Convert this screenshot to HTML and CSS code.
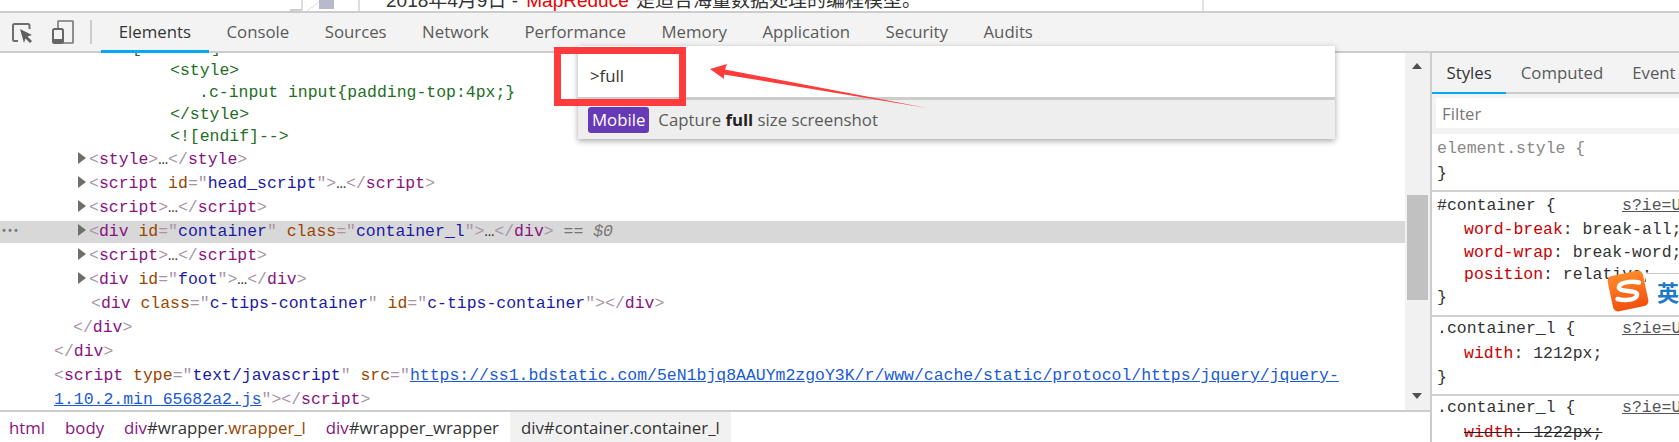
FILE: index.html
```html
<!DOCTYPE html>
<html lang="zh">
<head>
<meta charset="utf-8">
<title>DevTools</title>
<link rel="stylesheet" href="styles.css">
</head>
<body>
<div class="page-strip">
  <svg class="thumb" width="70" height="11" viewBox="0 0 70 11"><path d="M0 10h11" stroke="#999" stroke-width="1"/><path d="M12 0v11M69 0v11" stroke="#ddd" stroke-width="2"/><path d="M17 11l12-9" stroke="#ddd"/><rect x="29" y="0" width="15" height="9" fill="#b9b9cc"/></svg>
  <div class="page-text">2018年4月9日 - <span class="hit">MapReduce</span> 是适合海量数据处理的编程模型。</div>
  <div class="page-rule"></div>
  <div class="page-link">目录</div>
</div>

<div class="toolbar">
  <svg class="tool-inspect" width="20" height="20" viewBox="0 0 20 20"><path d="M6 18H2.5A1.5 1.5 0 0 1 1 16.500V2.500A1.500 1.500 0 0 1 2.500 1H16A1.500 1.500 0 0 1 17.500 2.500V6" fill="none" stroke="#6e6e6e" stroke-width="2"/><path d="M8 6l12 6-4.500 1.500L20 18l-2 2-4.500-4.500L12 20z" fill="#5f5f5f"/></svg>
  <svg class="tool-device" width="22" height="24" viewBox="0 0 22 24"><path d="M6 8V1.500A.5.500 0 0 1 6.500 1h14a.500.500 0 0 1 .500.500v21a.500.500 0 0 1-.500.500H11" fill="none" stroke="#777" stroke-width="1.600"/><rect x="1" y="9" width="10" height="14" rx="1.500" fill="none" stroke="#666" stroke-width="2"/><rect x="1" y="19" width="10" height="4" fill="#666"/></svg>
  <div class="tool-sep"></div>
  <div class="tabs">
    <div class="tab active">Elements</div>
    <div class="tab">Console</div>
    <div class="tab">Sources</div>
    <div class="tab">Network</div>
    <div class="tab">Performance</div>
    <div class="tab">Memory</div>
    <div class="tab">Application</div>
    <div class="tab">Security</div>
    <div class="tab">Audits</div>
  </div>
</div>

<div class="main">
  <div class="left">
    <div class="dom-area">
      <div class="tree">
        <div class="tight-group">
          <div class="row i-if cm">[if IE 8]</div>
          <div class="row i-style cm">&lt;style&gt;</div>
          <div class="row i-css cm">.c-input input{padding-top:4px;}</div>
          <div class="row i-style cm">&lt;/style&gt;</div>
          <div class="row i-style cm">&lt;![endif]--&gt;</div>
        </div>
        <div class="row wide i-arrow"><span class="arrow"></span><span class="br">&lt;</span><span class="tag">style</span><span class="br">&gt;</span>…<span class="br">&lt;/</span><span class="tag">style</span><span class="br">&gt;</span></div>
        <div class="row wide i-arrow"><span class="arrow"></span><span class="br">&lt;</span><span class="tag">script</span> <span class="an">id</span><span class="br">="</span><span class="av">head_script</span><span class="br">"&gt;</span>…<span class="br">&lt;/</span><span class="tag">script</span><span class="br">&gt;</span></div>
        <div class="row wide i-arrow"><span class="arrow"></span><span class="br">&lt;</span><span class="tag">script</span><span class="br">&gt;</span>…<span class="br">&lt;/</span><span class="tag">script</span><span class="br">&gt;</span></div>
        <div class="row wide i-arrow selected"><span class="dots">•••</span><span class="arrow"></span><span class="br">&lt;</span><span class="tag">div</span> <span class="an">id</span><span class="br">="</span><span class="av">container</span><span class="br">"</span> <span class="an">class</span><span class="br">="</span><span class="av">container_l</span><span class="br">"&gt;</span>…<span class="br">&lt;/</span><span class="tag">div</span><span class="br">&gt;</span><span class="eq"> == <em>$0</em></span></div>
        <div class="row wide i-arrow"><span class="arrow"></span><span class="br">&lt;</span><span class="tag">script</span><span class="br">&gt;</span>…<span class="br">&lt;/</span><span class="tag">script</span><span class="br">&gt;</span></div>
        <div class="row wide i-arrow"><span class="arrow"></span><span class="br">&lt;</span><span class="tag">div</span> <span class="an">id</span><span class="br">="</span><span class="av">foot</span><span class="br">"&gt;</span>…<span class="br">&lt;/</span><span class="tag">div</span><span class="br">&gt;</span></div>
        <div class="row wide i-2"><span class="br">&lt;</span><span class="tag">div</span> <span class="an">class</span><span class="br">="</span><span class="av">c-tips-container</span><span class="br">"</span> <span class="an">id</span><span class="br">="</span><span class="av">c-tips-container</span><span class="br">"&gt;&lt;/</span><span class="tag">div</span><span class="br">&gt;</span></div>
        <div class="row wide i-1"><span class="br">&lt;/</span><span class="tag">div</span><span class="br">&gt;</span></div>
        <div class="row wide i-0"><span class="br">&lt;/</span><span class="tag">div</span><span class="br">&gt;</span></div>
        <div class="row wide i-0"><span class="br">&lt;</span><span class="tag">script</span> <span class="an">type</span><span class="br">="</span><span class="av">text/javascript</span><span class="br">"</span> <span class="an">src</span><span class="br">="</span><span class="lk">https://ss1.bdstatic.com/5eN1bjq8AAUYm2zgoY3K/r/www/cache/static/protocol/https/jquery/jquery-</span></div>
        <div class="row wide i-0"><span class="lk">1.10.2.min_65682a2.js</span><span class="br">"&gt;&lt;/</span><span class="tag">script</span><span class="br">&gt;</span></div>
      </div>
      <div class="scrollbar">
        <span class="sb-up"></span>
        <div class="sb-track"><div class="sb-thumb"></div></div>
        <span class="sb-down"></span>
      </div>
    </div>
    <div class="crumbs">
      <div class="crumb"><span class="tag">html</span></div>
      <div class="crumb"><span class="tag">body</span></div>
      <div class="crumb"><span class="tag">div</span>#wrapper<span class="an">.wrapper_l</span></div>
      <div class="crumb"><span class="tag">div</span>#wrapper_wrapper</div>
      <div class="crumb current">div#container.container_l</div>
    </div>
  </div>

  <div class="side">
    <div class="side-tabs">
      <div class="side-tab active">Styles</div>
      <div class="side-tab">Computed</div>
      <div class="side-tab">Event Listeners</div>
    </div>
    <div class="filter-bar"><div class="filter">Filter</div></div>
    <div class="rule rule-element">
      <div class="ln muted">element.style {</div>
      <div class="ln">}</div>
    </div>
    <div class="rule rule-container">
      <div class="ln head"><span class="sel">#container {</span><span class="src">s?ie=UTF-8</span></div>
      <div class="ln decl"><span class="prop">word-break</span>: break-all;</div>
      <div class="ln decl"><span class="prop">word-wrap</span>: break-word;</div>
      <div class="ln decl"><span class="prop">position</span>: relative;</div>
      <div class="ln">}</div>
    </div>
    <div class="rule rule-l">
      <div class="ln head"><span class="sel">.container_l {</span><span class="src">s?ie=UTF-8</span></div>
      <div class="ln decl"><span class="prop">width</span>: 1212px;</div>
      <div class="ln">}</div>
    </div>
    <div class="rule rule-l last">
      <div class="ln head"><span class="sel">.container_l {</span><span class="src">s?ie=UTF-8</span></div>
      <div class="ln decl struck"><span class="prop">width</span>: 1222px;</div>
    </div>
  </div>
</div>

<div class="palette">
  <div class="palette-input">&gt;full</div>
  <div class="palette-item"><span class="badge">Mobile</span><span class="palette-title">Capture <b>full</b> size screenshot</span></div>
</div>

<div class="red-box"></div>
<svg class="red-arrow" width="230" height="50" viewBox="0 0 230 50"><path d="M0 10L17 5L15 10.500L217 49L14 15.500L14 20Z" fill="#ff3b3b"/></svg>

<div class="ime">
  <svg class="ime-logo" width="44" height="44" viewBox="0 0 44 44"><defs><linearGradient id="sg" x1="0" y1="0" x2="0" y2="1"><stop offset="0" stop-color="#ff8a2a"/><stop offset="1" stop-color="#f2500c"/></linearGradient></defs><rect x="4" y="4" width="36" height="36" rx="5" fill="url(#sg)" transform="rotate(-12 22 22)"/><path d="M33 13.500C26 12 16 13 13.500 16.500C11 21 17 21.500 22 22C28 22.500 33 23.500 30.500 27.500C28 31 18 32 11.500 30" fill="none" stroke="#fff" stroke-width="4.500" stroke-linecap="round"/></svg>
  <span class="ime-text">英</span>
</div>
</body>
</html>
```

FILE: styles.css
```css
* { box-sizing: border-box; }
html, body { margin: 0; padding: 0; }
body {
  position: relative;
  width: 1679px;
  height: 442px;
  overflow: hidden;
  background: #fff;
  display: flex;
  flex-direction: column;
  font-family: "Open Sans", "Liberation Sans", sans-serif;
  font-size: 16.8px;
  color: #333;
}

/* page behind DevTools */
.page-strip {
  height: 11px;
  flex: none;
  display: flex;
  overflow: hidden;
  font-family: "Liberation Sans", "Noto Sans CJK SC", sans-serif;
  font-size: 19px;
  line-height: 22px;
  color: #333;
}
.thumb { flex: none; margin-left: 290px; }
.page-text { flex: none; margin: -10px 0 0 26px; white-space: nowrap; width: 816px; }
.hit { color: #e00; margin: 0 2px 0 3px; }
.page-rule { flex: none; width: 2px; background: #e2e2e2; }
.page-link {
  flex: none;
  margin: -10px 0 0 477px;
  white-space: nowrap;
  color: #00c;
  text-decoration: underline;
}

/* toolbar */
.toolbar {
  height: 42px;
  flex: none;
  display: flex;
  align-items: stretch;
  background: #f3f3f3;
  border-top: 2px solid #ccc;
  border-bottom: 2px solid #ccc;
}
.tool-inspect { flex: none; margin: 10px 0 0 12px; }
.tool-device { flex: none; margin: 7px 0 0 20px; }
.tool-sep { flex: none; width: 2px; height: 24px; margin: 7px 0 0 16px; background: #ccc; }
.tabs { display: flex; margin-left: 9px; }
.tab {
  position: relative;
  padding: 0 17.75px;
  color: #5a5a5a;
  line-height: 38px;
  white-space: nowrap;
}
.tab.active { color: #333; }
.tab.active::after {
  content: "";
  position: absolute;
  left: 0;
  right: 0;
  bottom: -2px;
  height: 3px;
  background: #03a9f4;
}

/* main split */
.main { flex: 1; min-height: 0; display: flex; }
.left { width: 1430px; flex: none; display: flex; flex-direction: column; }
.dom-area { flex: 1; min-height: 0; display: flex; border-bottom: 2px solid #ccc; }
.tree {
  flex: 1;
  min-width: 0;
  overflow: hidden;
  font-family: "Liberation Mono", "DejaVu Sans Mono", monospace;
  font-size: 16.48px;
  color: #333;
}
.tight-group { margin: -15px 0 1px; }
.row { height: 22px; line-height: 22px; white-space: nowrap; position: relative; }
.row.wide { margin-bottom: 2px; }
.selected { background: #d8d8d8; }
.cm { color: #236e25; }
.i-if { padding-left: 132px; }
.i-style { padding-left: 170px; }
.i-css { padding-left: 199px; }
.i-arrow { padding-left: 89px; }
.i-2 { padding-left: 91px; }
.i-1 { padding-left: 73px; }
.i-0 { padding-left: 54px; }
.br { color: #a894a6; }
.tag { color: #881280; }
.an { color: #994500; }
.av { color: #1a1aa6; }
.lk { color: #1a5ad6; text-decoration: underline; }
.eq { color: #777; }
.eq em { font-style: italic; }
.arrow {
  position: absolute;
  left: 78px;
  top: 3px;
  border-left: 8px solid #6e6e6e;
  border-top: 6px solid transparent;
  border-bottom: 6px solid transparent;
}
.dots {
  position: absolute;
  left: 1px;
  top: 0;
  font-size: 10px;
  font-weight: 700;
  color: #777;
}

/* scrollbar */
.scrollbar {
  flex: none;
  width: 25px;
  background: #f1f1f1;
  display: flex;
  flex-direction: column;
  align-items: center;
  position: relative;
}
.sb-track { width: 21px; flex: 1; padding-top: 142px; }
.sb-thumb { height: 105px; background: #c1c1c1; }
.sb-up, .sb-down {
  position: absolute;
  left: 7px;
  border-left: 5.5px solid transparent;
  border-right: 5.5px solid transparent;
}
.sb-up { top: 10px; border-bottom: 6px solid #505050; }
.sb-down { bottom: 11px; border-top: 6px solid #505050; }

/* breadcrumbs */
.crumbs { height: 30px; flex: none; display: flex; }
.crumb {
  padding: 0 11px 0 9px;
  line-height: 31px;
  white-space: nowrap;
  color: #333;
}
.crumb.current { background: #f1f1f1; padding: 0 11px; }

/* styles side */
.side {
  width: 249px;
  flex: none;
  overflow: hidden;
  border-left: 2px solid #ccc;
  font-family: "Liberation Mono", "DejaVu Sans Mono", monospace;
  font-size: 16.48px;
  color: #333;
}
.side-tabs {
  display: flex;
  height: 41px;
  background: #f3f3f3;
  border-bottom: 2px solid #ccc;
  font-family: "Open Sans", "Liberation Sans", sans-serif;
  font-size: 16.8px;
  white-space: nowrap;
}
.side-tab { position: relative; padding: 0 14.5px; line-height: 39px; color: #5a5a5a; flex: none; }
.side-tab.active { color: #333; }
.side-tab.active::after {
  content: "";
  position: absolute;
  left: 0;
  right: 0;
  bottom: -2px;
  height: 2px;
  background: #03a9f4;
}
.filter-bar { height: 40px; background: #f3f3f3; padding: 4px 0 6px 4px; }
.filter {
  height: 30px;
  background: #fff;
  padding-left: 6px;
  line-height: 32px;
  font-family: "Open Sans", "Liberation Sans", sans-serif;
  font-size: 16.8px;
  color: #777;
}
.rule { border-bottom: 2px solid #d0d0d0; padding-left: 5px; white-space: nowrap; }
.rule-element { height: 58px; padding-top: 3px; }
.rule-element .ln { height: 25px; line-height: 24px; }
.rule-container { height: 125px; padding-top: 2px; }
.rule-container .ln { height: 22.5px; line-height: 22.5px; }
.rule-container .head { height: 25px; line-height: 23.5px; }
.rule-l { height: 79px; }
.rule-l.last { border-bottom: 0; }
.ln { height: 23.5px; line-height: 23.5px; }
.rule-l .head { height: 25px; }
.head { display: flex; }
.sel { width: 185px; flex: none; }
.src { color: #555; text-decoration: underline; }
.muted { color: #888; }
.decl { padding-left: 27px; }
.prop { color: #c80000; }
.struck { text-decoration: line-through; text-decoration-color: #222; }

/* overlays */
.palette {
  position: absolute;
  left: 578px;
  top: 46px;
  width: 757px;
  height: 93px;
  background: #eee;
  box-shadow: 0 2px 6px rgba(0, 0, 0, 0.35);
}
.palette-input {
  height: 51px;
  background: #fff;
  border-bottom: 3px solid #ccc;
  box-sizing: content-box;
  padding-left: 12px;
  line-height: 60px;
  color: #333;
}
.palette-item { display: flex; align-items: center; height: 39px; padding-left: 10px; }
.badge {
  background: #673ab7;
  color: #fff;
  border-radius: 3px;
  padding: 0 4px;
  height: 26px;
  line-height: 26px;
  margin-right: 9px;
}
.palette-title { color: #5a5a5a; white-space: nowrap; }
.palette-title b { color: #222; font-weight: 700; }
.red-box {
  position: absolute;
  left: 554px;
  top: 47px;
  width: 132px;
  height: 59px;
  border: 7px solid #ff3b3b;
}
.red-arrow { position: absolute; left: 710px; top: 59px; }
.ime {
  position: absolute;
  left: 1606px;
  top: 269px;
  width: 73px;
  height: 45px;
  overflow: hidden;
}
.ime::before {
  content: "";
  position: absolute;
  left: 40px;
  right: 0;
  top: 4px;
  bottom: 0;
  background: #fff;
  border-top: 1px solid #ccc;
}
.ime-logo { position: absolute; left: 0; top: 0; }
.ime-text {
  position: absolute;
  left: 51px;
  top: 7px;
  font-family: "Noto Sans CJK SC", sans-serif;
  font-size: 22px;
  line-height: 30px;
  font-weight: 700;
  color: #1f78c8;
}
```
